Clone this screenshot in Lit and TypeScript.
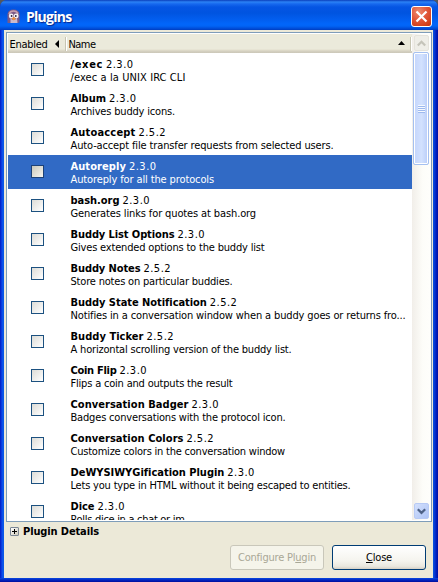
import { LitElement, html, css, svg } from "lit";
import { customElement, property } from "lit/decorators.js";
import { classMap } from "lit/directives/class-map.js";

interface Plugin {
  name: string;
  version: string;
  about: string;
  nameWidth: number;
  aboutWidth: number;
}

const p = (name: string, version: string, about: string, nameWidth: number, aboutWidth: number): Plugin => ({
  name, version, about, nameWidth, aboutWidth,
});

const PLUGINS: Plugin[] = [
  p("/exec", "2.3.0", "/exec a la UNIX IRC CLI", 32.5, 115),
  p("Album", "2.3.0", "Archives buddy icons.", 35.5, 104.5),
  p("Autoaccept", "2.5.2", "Auto-accept file transfer requests from selected users.", 65, 263),
  p("Autoreply", "2.3.0", "Autoreply for all the protocols", 55.5, 143.5),
  p("bash.org", "2.3.0", "Generates links for quotes at bash.org", 49, 185.5),
  p("Buddy List Options", "2.3.0", "Gives extended options to the buddy list", 104, 194),
  p("Buddy Notes", "2.5.2", "Store notes on particular buddies.", 70, 162),
  p("Buddy State Notification", "2.5.2", "Notifies in a conversation window when a buddy goes or returns fro...", 136, 335),
  p("Buddy Ticker", "2.5.2", "A horizontal scrolling version of the buddy list.", 73, 221),
  p("Coin Flip", "2.3.0", "Flips a coin and outputs the result", 46, 162),
  p("Conversation Badger", "2.3.0", "Badges conversations with the protocol icon.", 118, 215),
  p("Conversation Colors", "2.5.2", "Customize colors in the conversation window", 113, 214.5),
  p("DeWYSIWYGification Plugin", "2.3.0", "Lets you type in HTML without it being escaped to entities.", 153.5, 280),
  p("Dice", "2.3.0", "Rolls dice in a chat or im", 24, 114),
];

/** A run of text whose tracking is adjusted so that it fills a given width. */
@customElement("fit-text")
class FitText extends LitElement {
  static styles = css`
    :host { display: inline-block; white-space: pre; }
  `;
  @property({ type: Number }) width = 0;
  @property() text = "";
  @property({ type: Number }) accel = -1;

  firstUpdated() {
    const natural = this.getBoundingClientRect().width;
    this.style.letterSpacing = `${(this.width - natural) / this.text.length}px`;
  }

  render() {
    const i = this.accel;
    return i < 0
      ? html`${this.text}`
      : html`${this.text.slice(0, i)}<u>${this.text[i]}</u>${this.text.slice(i + 1)}`;
  }
}

@customElement("plugin-row")
class PluginRow extends LitElement {
  static styles = css`
    :host { display: block; height: 34px; flex: none; }
    .row { display: flex; height: 34px; box-sizing: border-box; padding-left: 23px; color: #000; }
    .row.selected { background: #316ac5; color: #fff; }
    .check {
      box-sizing: border-box; width: 13px; height: 13px; margin: 10px 26.5px 0 0; flex: none;
      border: 1px solid #1c5180; background: linear-gradient(135deg, #dcdcd7, #fff);
    }
    .selected .check { background: linear-gradient(135deg, #c9c7ba, #f6f5f0); border-color: #1c4177; }
    .words { padding-top: 5px; }
    .line { height: 13px; line-height: 13px; white-space: pre; display: flex; }
    .name { font-weight: bold; margin-right: 3px; }
  `;
  @property({ attribute: false }) plugin!: Plugin;
  @property({ type: Boolean }) selected = false;

  render() {
    const g = this.plugin;
    return html`
      <div class=${classMap({ row: true, selected: this.selected })}>
        <span class="check"></span>
        <div class="words">
          <div class="line">
            <fit-text class="name" .text=${g.name} .width=${g.nameWidth}></fit-text>
            <fit-text .text=${g.version} .width=${27.5}></fit-text>
          </div>
          <div class="line"><fit-text .text=${g.about} .width=${g.aboutWidth}></fit-text></div>
        </div>
      </div>
    `;
  }
}

const chevron = (d: string, color: string) => html`
  <svg width="9" height="7" viewBox="0 0 9 7">${svg`<path d=${d} fill="none" stroke=${color} stroke-width="2.2"/>`}</svg>
`;

@customElement("app-root")
class AppRoot extends LitElement {
  static styles = css`
    :host {
      display: block; width: 438px; height: 582px; overflow: hidden;
      font-family: "DejaVu Sans Condensed", "DejaVu Sans", sans-serif;
      font-stretch: condensed; font-size: 11px; color: #000;
    }
    .window {
      box-sizing: border-box; width: 438px; height: 582px; display: flex; flex-direction: column;
      background:
        linear-gradient(#0a4be0 0, #0535d0 1px, #0018b0 3px, #00109c 4px) bottom / 100% 4px no-repeat,
        linear-gradient(90deg, #0018c0 0, #0831d9 1px, #0d5cf0 3px, #0855dd 4px, #0855dd 433px, #0745d8 434px, #0022c4 436px, #0010a0 438px);
      padding-bottom: 4px; border-radius: 7px 7px 0 0;
    }
    .back { background: #54585e; }
    .titlebar {
      height: 30px; flex: none; display: flex; align-items: center; box-sizing: border-box;
      padding: 2px 6px 0 7px; border-radius: 7px 7px 0 0; color: #fff;
      background: linear-gradient(#0a3fbb 0, #2b82f5 2px, #1668ee 4px, #0555e3 7px, #0054e0 13px, #025dee 19px, #0266fa 24px, #0264f6 26px, #0048d2 29px, #003cbd 30px);
    }
    .title {
      margin-left: 6px; font: bold 14px "Open Sans", "Noto Sans", sans-serif; flex: none;
      text-shadow: 1px 1px 1px #08268b;
    }
    .closer {
      margin-left: auto; width: 21px; height: 21px; box-sizing: border-box; border: 1px solid #fff; border-radius: 3px;
      display: grid; place-items: center;
      background: radial-gradient(circle at 35% 25%, #ec8c70, #e1573a 45%, #d1401a 80%, #b93412);
    }
    .client {
      flex: 1; min-height: 0; margin: 0 5px 0 4px; padding: 2px 1px 0 2px; background: #ece9d8;
      display: flex; flex-direction: column;
    }
    .list {
      box-sizing: border-box; height: 490px; flex: none; border: 1px solid #7f9db9; background: #fff;
      padding: 1px; display: flex;
    }
    .table { flex: 1; min-width: 0; overflow: hidden; display: flex; flex-direction: column; }
    .head {
      height: 19px; flex: none; box-sizing: border-box; display: flex; align-items: center;
      background: linear-gradient(#ebeadb 0 15px, #e2decd 16px, #d6d2c2 17px, #cbc7b8 19px);
    }
    .head fit-text { padding-top: 2px; }
    .head .first { margin-left: 1.5px; }
    .head .left { margin-left: 7px; }
    .sep { width: 1px; height: 14px; background: #c7c5b2; border-right: 1px solid #fff; }
    .head .sep1 { margin-left: 6px; }
    .head .second { margin-left: 2px; }
    .head .up { margin-left: auto; margin-right: 5px; margin-bottom: 2px; }
    .rows { flex: 1; min-height: 0; overflow: hidden; display: flex; flex-direction: column; }
    .bar {
      width: 18px; flex: none; box-sizing: border-box; display: flex; flex-direction: column; align-items: center;
      padding: 1px 0; background: linear-gradient(90deg, #f1eee9, #fdfdf9 60%, #fefefb);
    }
    .arrow {
      width: 15px; height: 16px; box-sizing: border-box; flex: none; display: grid; place-items: center;
      border-radius: 2px; border: 1px solid #fff;
    }
    .arrow.off { background: #efeee8; border-color: #e5e3dc; }
    .arrow.on { margin-top: auto; background: linear-gradient(135deg, #d3e0fd, #aec4f5); border-color: #b7caf5; }
    .thumb {
      width: 16px; height: 113px; flex: none; box-sizing: border-box; margin-top: 1px; border-radius: 2px;
      border: 1px solid #a5c0f0; box-shadow: inset 0 0 0 1px #fff;
      background: linear-gradient(90deg, #c5d6fc, #d2e1fe 55%, #b9cdf8);
      display: grid; place-items: center;
    }
    .grip { width: 7px; height: 8px; background: repeating-linear-gradient(#f5f9ff 0 1px, #9db9ee 1px 2px); }
    .details { display: flex; align-items: center; height: 18px; margin: 0 0 0 4px; flex: none; }
    .plus {
      width: 9px; height: 9px; box-sizing: border-box; border: 1px solid #7b8795; border-radius: 1px;
      background: linear-gradient(135deg, #fff, #cfcbbb); display: grid; place-items: center;
    }
    .details fit-text { font-weight: bold; margin-left: 4px; }
    .buttons { display: flex; justify-content: flex-end; gap: 8px; margin: 5px 6px 0 0; }
    .button {
      width: 94px; height: 25px; box-sizing: border-box; border-radius: 3px; display: grid; place-items: center;
      border: 1px solid #003c74; background: linear-gradient(#fff, #f5f4ee 65%, #eae8df 88%, #d6d0c5);
    }
    .button.disabled { border-color: #c9c7ba; background: #f5f4ea; color: #a9a796; }
  `;

  render() {
    return html`
      <div class="back">
        <div class="window">
          <div class="titlebar">
            <svg width="13" height="15" viewBox="0 0 13 15">
              <path d="M.5 14V5Q1 .5 6.5 .5T12.5 5v8.5l-2 .5H3z" fill="#7c5a86"/>
              <path d="M2 5q1-3 4.500-3T11 5" stroke="#c99fb0" stroke-width="1.3" fill="none"/>
              <path d="M3.500 9q3 4 6.500 0l.5 5h-7z" fill="#cbb9cc"/>
              <circle cx="4.200" cy="7" r="2.400" fill="#f7f2f6"/>
              <circle cx="9.200" cy="7" r="2.400" fill="#f7f2f6"/>
              <circle cx="4.600" cy="7" r=".9" fill="#2e2340"/>
              <circle cx="8.800" cy="7" r=".9" fill="#2e2340"/>
              <path d="M4.500 9.500l2.200-1.500L9 9.500l-2.200 2z" fill="#f0903c"/>
            </svg>
            <fit-text class="title" .text=${"Plugins"} .width=${45.5}></fit-text>
            <span class="closer">
              <svg width="13" height="13" viewBox="0 0 13 13"><path d="M1.5 1.5l10 10M11.5 1.5l-10 10" stroke="#fff" stroke-width="2.2"/></svg>
            </span>
          </div>
          <div class="client">
            <div class="list">
              <div class="table">
                <div class="head">
                  <fit-text class="first" .text=${"Enabled"} .width=${38}></fit-text>
                  <svg class="left" width="4" height="8" viewBox="0 0 4 8"><path d="M4 0v8L0 4z"/></svg>
                  <span class="sep sep1"></span>
                  <fit-text class="second" .text=${"Name"} .width=${27}></fit-text>
                  <svg class="up" width="7" height="4" viewBox="0 0 7 4"><path d="M0 4h7L3.5 0z"/></svg>
                  <span class="sep"></span>
                </div>
                <div class="rows">
                  ${PLUGINS.map((g) => html`<plugin-row .plugin=${g} ?selected=${false} .selected=${g.name === "Autoreply"}></plugin-row>`)}
                </div>
              </div>
              <div class="bar">
                <span class="arrow off">${chevron("M.8 5.5L4.5 1.8 8.2 5.5", "#c5c4ba")}</span>
                <span class="thumb"><span class="grip"></span></span>
                <span class="arrow on">${chevron("M.8 1.2L4.5 4.9 8.2 1.2", "#4d6185")}</span>
              </div>
            </div>
            <div class="details">
              <span class="plus"><svg width="7" height="7" viewBox="0 0 7 7"><path d="M1 3.5h5M3.5 1v5" stroke="#000"/></svg></span>
              <fit-text .text=${"Plugin Details"} .width=${76}></fit-text>
            </div>
            <div class="buttons">
              <span class="button disabled"><fit-text .text=${"Configure Plugin"} .accel=${12} .width=${78}></fit-text></span>
              <span class="button"><fit-text .text=${"Close"} .accel=${0} .width=${26}></fit-text></span>
            </div>
          </div>
        </div>
      </div>
    `;
  }
}
